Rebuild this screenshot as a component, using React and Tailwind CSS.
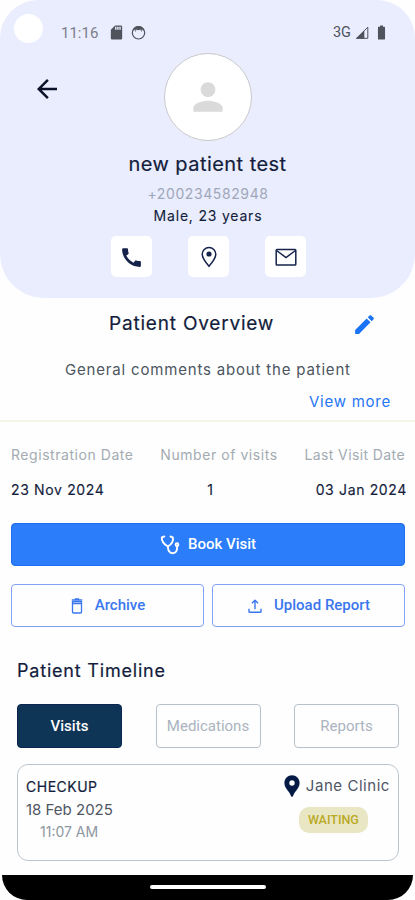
import {
  MdArrowBack,
  MdBatteryFull,
  MdCall,
  MdEdit,
  MdLocationPin,
  MdPerson,
  MdSdCard,
} from "react-icons/md";

export default function App() {
  return (
    <div className="flex h-[900px] w-[415px] flex-col overflow-hidden bg-[#fefefe] font-['Inter',sans-serif] text-[#141d3c]">
      <Header />

      {/* Overview */}
      <section className="flex h-[124px] flex-col border-b-2 border-[#f5f4e8]">
        <div className="mt-[14px] flex h-6 items-center">
          <h2 className="ml-[109px] w-[166px] whitespace-nowrap text-[19px] leading-6 tracking-[0.8px] [-webkit-text-stroke:0.2px]">
            Patient Overview
          </h2>
          <MdEdit className="ml-[77px] text-[#1b74f5]" size={25} />
        </div>
        <p className="ml-[65px] mt-[24px] whitespace-nowrap text-[15px] leading-5 tracking-[0.82px] text-[#4c5560]">
          General comments about the patient
        </p>
        <a className="mr-6 mt-[12px] self-end whitespace-nowrap text-[15px] leading-5 tracking-[0.75px] text-[#2675f5]">
          View more
        </a>
      </section>

      {/* Stats */}
      <section className="mt-[23px] flex h-[54px] justify-between pl-[11px] pr-2">
        <Stat label="Registration Date" value="23 Nov 2024" />
        <Stat label="Number of visits" value="1" align="items-center" valueClass="pr-[17px]" />
        <Stat label="Last Visit Date" value="03 Jan 2024" align="items-end" labelClass="pr-[2px] tracking-[0.4px]" />
      </section>

      {/* Actions */}
      <section className="mt-6 flex flex-col gap-[18px] pl-[11px] pr-[10px] font-['Roboto',sans-serif] text-[15px] font-medium">
        <button className="flex h-[43px] items-center justify-center gap-[8px] rounded border border-[#1d6cf2] bg-[#2b7df9] text-white">
          <StethoscopeIcon />
          <span>Book Visit</span>
        </button>
        <div className="grid grid-cols-2 gap-2">
          <OutlineButton icon={<TrashIcon />} label="Archive" />
          <OutlineButton icon={<UploadIcon />} label="Upload Report" />
        </div>
      </section>

      {/* Timeline */}
      <section className="mt-[32px] flex flex-col pl-[17px] pr-4">
        <h2 className="h-6 text-[18px] leading-6 tracking-[0.8px] [-webkit-text-stroke:0.2px]">Patient Timeline</h2>
        <div className="mt-[21px] flex justify-between font-['Roboto',sans-serif] text-[15px]">
          <Tab label="Visits" active />
          <Tab label="Medications" />
          <Tab label="Reports" />
        </div>
        <div className="mt-4 flex h-[97px] justify-between rounded-[11px] border border-[#bcc6d0] pl-[8px] pr-2">
          <div className="flex flex-col">
            <span className="mt-3 text-[14px] leading-5 tracking-[0.5px] [-webkit-text-stroke:0.2px]">CHECKUP</span>
            <span className="mt-[3px] text-[15px] leading-5 text-[#4f5664]">18 Feb 2025</span>
            <span className="ml-[14px] mt-[2px] text-[14px] leading-5 text-[#8d97a2]">11:07 AM</span>
          </div>
          <div className="flex flex-col">
            <div className="mt-[9px] flex h-6 items-center gap-[1px]">
              <MdLocationPin className="-ml-[2px] text-[#051a45]" size={26} />
              <span className="whitespace-nowrap pt-[1px] text-[15px] tracking-[0.55px] text-[#4f5664]">Jane Clinic</span>
            </div>
            <span className="ml-[18px] mt-[9px] flex h-[26px] w-[69px] items-center justify-center rounded-[10px] bg-[#e9e6c4] font-['Roboto',sans-serif] text-[12.5px] font-medium text-[#b9aa24]">
              WAITING
            </span>
          </div>
        </div>
      </section>

      {/* Navigation bar */}
      <footer className="mx-[2px] mt-auto flex h-[25px] justify-center rounded-b-[32px] bg-black">
        <div className="mt-[10px] h-1 w-[116px] rounded-full bg-white" />
      </footer>
    </div>
  );
}

function Header() {
  return (
    <header className="flex h-[298px] flex-col rounded-b-[44px] rounded-t-[38px] bg-[#e9edfe]">
      <div className="flex h-[53px] items-start font-['Roboto',sans-serif] text-[15px] text-[#50525c]">
        <div className="ml-[14px] mt-[14px] size-[29px] rounded-full bg-white" />
        <span className="ml-[18px] mt-[23px] w-[47px] leading-5 text-[#7c7e89]">11:16</span>
        <MdSdCard className="mt-[24px]" size={17} />
        <FaceIcon />
        <span className="ml-auto mr-[4px] mt-[23px] text-[14.5px] leading-5">3G</span>
        <SignalIcon />
        <MdBatteryFull className="mr-[25px] mt-[24px]" size={17} />
      </div>
      <div className="flex h-[88px]">
        <MdArrowBack className="ml-[32px] mt-[21px] text-[#0b1128]" size={30} />
        <div className="ml-[102px] flex size-[88px] items-center justify-center rounded-full border border-[#c9c9cb] bg-white">
          <MdPerson className="text-[#dadada]" size={44} />
        </div>
      </div>
      <h1 className="mt-[11px] self-center text-[20px] leading-6 tracking-[0.45px] [-webkit-text-stroke:0.2px]">
        new patient test
      </h1>
      <p className="mt-[8px] self-center pl-[1px] text-[14px] leading-5 tracking-[0.6px] text-[#a0a7b8]">+200234582948</p>
      <p className="mt-[2px] self-center pl-[1px] text-[14px] leading-5 tracking-[0.8px] [-webkit-text-stroke:0.1px]">
        Male, 23 years
      </p>
      <div className="mt-[10px] flex justify-center gap-[36px] pl-[1px]">
        <ContactButton>
          <MdCall size={25} />
        </ContactButton>
        <ContactButton>
          <PlaceIcon />
        </ContactButton>
        <ContactButton>
          <MailIcon />
        </ContactButton>
      </div>
    </header>
  );
}

function ContactButton({ children }) {
  return (
    <button className="flex size-[41px] items-center justify-center rounded-[5px] bg-white pl-[1px] pt-[1px] text-[#15234b]">
      {children}
    </button>
  );
}

function Stat({ label, value, align = "items-start", labelClass = "tracking-[0.55px]", valueClass = "" }) {
  return (
    <div className={`flex flex-col whitespace-nowrap ${align}`}>
      <span className={`text-[14px] leading-5 text-[#a3abb2] ${labelClass}`}>{label}</span>
      <span className={`mt-[15px] text-[14px] leading-5 tracking-[0.65px] [-webkit-text-stroke:0.15px] ${valueClass}`}>
        {value}
      </span>
    </div>
  );
}

function OutlineButton({ icon, label }) {
  return (
    <button className="flex h-[43px] items-center justify-center gap-[11px] rounded border border-[#7fa2f5] text-[#3a77ee]">
      {icon}
      <span>{label}</span>
    </button>
  );
}

function Tab({ label, active }) {
  const look = active
    ? "border-[#0a2650] bg-[#0f3556] font-medium text-white"
    : "border-[#b7c1cc] text-[#aab3be]";
  return (
    <button className={`flex h-[44px] w-[105px] items-center justify-center rounded border ${look}`}>{label}</button>
  );
}

function FaceIcon() {
  return (
    <svg className="ml-[6px] mt-[25px]" width="15" height="15" viewBox="0 0 15 15" fill="none">
      <circle cx="7.5" cy="7.8" r="6.2" stroke="currentColor" strokeWidth="1.2" />
      <path d="M2 4.800C3 2.300 5 1 7.500 1s4.500 1.300 5.500 3.800L10.500 4.300 7.500 5.300 4.500 4.300z" fill="currentColor" />
      <path d="M2 5.500L5 4l-.5 2.500M13 5.500L10 4l.5 2.500" stroke="currentColor" strokeWidth="0.8" />
    </svg>
  );
}

function SignalIcon() {
  return (
    <svg className="mr-[4px] mt-[26px]" width="14" height="13" viewBox="0 0 14 13" fill="none">
      <path d="M1.500 12.300L12.800 1.200v11.100z" stroke="currentColor" strokeWidth="1" />
      <path d="M.8 12.800L9.300 4.400v8.400z" fill="currentColor" />
    </svg>
  );
}

function PlaceIcon() {
  return (
    <svg width="24" height="24" viewBox="0 0 24 24" fill="none" stroke="currentColor">
      <path d="M12 21.300C8.500 17.200 5.200 13 5.200 9.300a6.800 6.800 0 0 1 13.600 0c0 3.700-3.300 7.900-6.800 12z" strokeWidth="1.500" />
      <circle cx="12" cy="9" r="2.600" fill="currentColor" stroke="none" />
    </svg>
  );
}

function MailIcon() {
  return (
    <svg width="24" height="24" viewBox="0 0 24 24" fill="none" stroke="currentColor" strokeWidth="1.500">
      <rect x="2.200" y="4.500" width="19.600" height="15.500" rx="0.800" />
      <path d="M2.500 5.500L12 12.500l9.500-7" />
    </svg>
  );
}

function StethoscopeIcon() {
  return (
    <svg width="20" height="20" viewBox="0 0 20 20" fill="none" stroke="currentColor" strokeWidth="1.900" strokeLinecap="round" strokeLinejoin="round">
      <path d="M4.300 1.500L1.800 2.300C1.500 6.500 3.500 9 7.800 11.500 12 9 13.800 6.500 12.800 2.300L10.500 1.500" />
      <path d="M7.800 11.500c.2 4 2 6.700 5 6.700 3 0 4.600-2.400 4.300-6.200" />
      <circle cx="17" cy="9.700" r="1.400" />
    </svg>
  );
}

function TrashIcon() {
  return (
    <svg width="14" height="18" viewBox="0 0 14 18" fill="none" stroke="currentColor" strokeWidth="1.300">
      <path d="M2.500 4.500h9v10.500a1 1 0 0 1-1 1h-7a1 1 0 0 1-1-1zM1.800 2.800h10.400M4.800 1.800h4.400M2.500 6.500h9" />
    </svg>
  );
}

function UploadIcon() {
  return (
    <svg width="16" height="16" viewBox="0 0 16 16" fill="none" stroke="currentColor" strokeWidth="1.400" strokeLinejoin="round">
      <path d="M8 11.200V2.500M4.900 5.300L8 2.200l3.100 3.100M2 10.800v2.700q0 .8.800.8h10.400q.8 0 .8-.8v-2.700" />
    </svg>
  );
}
